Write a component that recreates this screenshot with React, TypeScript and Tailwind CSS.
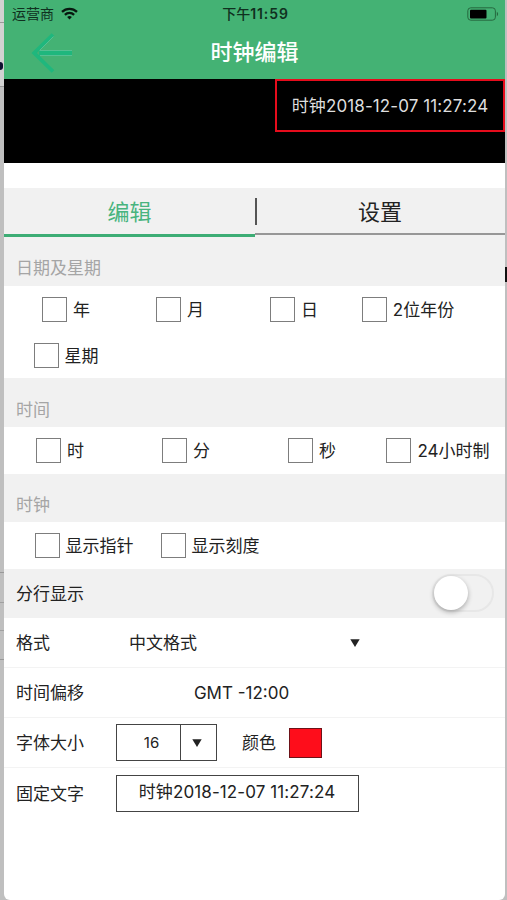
import type { ReactNode } from "react";

function CheckItem({ label }: { label: string }) {
  return (
    <label className="flex h-6 items-center justify-center whitespace-nowrap">
      <span className="mr-[6px] block size-[25px] shrink-0 border border-[#7d7d7d] bg-white" />
      <span className="pt-[3px]">{label}</span>
    </label>
  );
}

function SectionTitle({ className, children }: { className: string; children: ReactNode }) {
  return (
    <div className={`flex items-end bg-[#f1f1f1] pb-[5px] pl-3 leading-6 text-[#a5a5a5] ${className}`}>
      {children}
    </div>
  );
}

function Row({ label, children }: { label: string; children: ReactNode }) {
  return (
    <div className="flex h-[50px] items-center border-b border-[#f3f3f3] pl-3 last:border-b-0">
      <span className="w-[100px] shrink-0 pt-[3px]">{label}</span>
      {children}
    </div>
  );
}

function Triangle() {
  return (
    <svg width="10" height="8" viewBox="0 0 10 8">
      <path d="M0.3 0.3h9.4L5 8z" fill="#222" />
    </svg>
  );
}

function StatusBar() {
  return (
    <div className="grid h-[27px] grid-cols-3 items-center pl-2 pr-1.5 text-[14px] text-[#10301f]">
      <div className="flex items-center gap-[7px]">
        <span>运营商</span>
        <svg width="17" height="13" viewBox="0 0 17 13" fill="none" stroke="#07180f" strokeWidth="2.3">
          <path d="M1 4.9c4.2-4.1 10.8-4.1 15 0" />
          <path d="M3.9 7.8c2.6-2.5 6.6-2.5 9.2 0" />
          <path d="M6.1 10.1a3.4 3.4 0 0 1 4.8 0l-2.4 2.5z" fill="#07180f" stroke="none" />
        </svg>
      </div>
      <div className="whitespace-nowrap text-center font-semibold tracking-[0.9px]">
        <span className="font-medium tracking-normal">下午</span>11:59
      </div>
      <div className="flex items-center justify-end">
        <svg width="32" height="14" viewBox="0 0 32 14">
          <rect x="0.8" y="0.8" width="27.6" height="12.4" rx="3" fill="none" stroke="#26683f" />
          <rect x="3" y="2.8" width="16.5" height="8.6" rx="1" fill="#000" />
          <path d="M29.8 4.8c1.8.7 1.8 3.7 0 4.4z" fill="#26683f" />
        </svg>
      </div>
    </div>
  );
}

function Header() {
  return (
    <header className="h-[79px] bg-[#44b274]">
      <StatusBar />
      <div className="grid h-[51px] grid-cols-3 items-center">
        <svg className="ml-[27px]" width="42" height="40" viewBox="0 0 42 40" fill="none">
          <path d="M22 1.5L3.2 20L22 38.5" stroke="#1fb77d" strokeWidth="3.8" />
          <path d="M8 20h33" stroke="#1fb77d" strokeWidth="5.5" />
          <path d="M9 17.5h32M9 22.5h32M8.5 17.5L22.5 3.5" stroke="#56c093" />
        </svg>
        <h1 className="text-center text-[22px] font-medium text-white">时钟编辑</h1>
      </div>
    </header>
  );
}

export default function App() {
  return (
    <div className="relative h-[900px] w-[507px] overflow-hidden bg-[#bfbfbf] pl-1 pr-0.5 font-['Inter','Noto_Sans_CJK_SC',sans-serif] text-[17px] text-[#222]">
      {/* window edges behind the phone */}
      <div className="absolute left-0 top-0 h-[87px] w-1 border-b border-[#999] bg-[#d2d2d2]">
        <div className="h-[23px] border-b border-[#999]" />
        <div className="mt-[39px] h-2 w-[3px] rounded-r-full bg-[#101030]" />
      </div>
      <div className="absolute left-0 top-[572px] h-[88px] w-1 border-y border-[#999]">
        <div className="mt-[29px] h-[29px] border-y border-[#a0a0a0]" />
      </div>
      <div className="absolute right-0 top-[267px] h-[15px] w-0.5 bg-[#111]" />

      <div className="relative h-[900px] w-[501px] overflow-hidden rounded-b-[6px] bg-white">
        <Header />

        {/* Preview */}
        <div className="flex h-[84px] items-start justify-end bg-black">
          <div className="flex h-[53px] w-[230px] items-center justify-center border-2 border-[#e60c1c] text-[#dedede]">
            <span className="whitespace-nowrap pt-0.5 tracking-[0.1px]">时钟2018-12-07 11:27:24</span>
          </div>
        </div>

        {/* Tabs */}
        <div className="mt-[25px] flex h-[49px] bg-[#f1f1f1] text-[22px]">
          <div className="flex w-[251px] items-center justify-center border-b-[3px] border-[#3dad75] pt-0.5 text-[#48b47e]">
            编辑
          </div>
          <div className="relative flex h-[47px] flex-1 items-center justify-center border-b-2 border-[#979797] pt-[3px]">
            <span className="absolute left-0 top-[10px] h-[27px] w-0.5 bg-[#555]" />
            设置
          </div>
        </div>

        <SectionTitle className="h-[49px] pb-[6px]">日期及星期</SectionTitle>
        <div className="grid h-[92px] w-[461px] grid-cols-[114px_114px_114px_114px] content-start gap-y-[22px] pl-[5px] pt-[11px]">
          <CheckItem label="年" />
          <CheckItem label="月" />
          <CheckItem label="日" />
          <CheckItem label="2位年份" />
          <CheckItem label="星期" />
        </div>

        <SectionTitle className="h-[49px]">时间</SectionTitle>
        <div className="-ml-[7px] grid h-[47px] grid-cols-[126px_126px_126px_126px] items-center">
          <CheckItem label="时" />
          <CheckItem label="分" />
          <CheckItem label="秒" />
          <CheckItem label="24小时制" />
        </div>

        <SectionTitle className="h-[48px]">时钟</SectionTitle>
        <div className="grid h-[47px] grid-cols-[126px_126px] items-center pl-[17px]">
          <CheckItem label="显示指针" />
          <CheckItem label="显示刻度" />
        </div>

        <div className="flex h-[49px] items-center justify-between bg-[#f1f1f1] pl-3 pr-[11px]">
          <span className="pt-[3px]">分行显示</span>
          <div className="mb-0.5 h-[38px] w-[62px] rounded-full border-2 border-[#e7e7e7]">
            <div className="size-[34px] rounded-full bg-white shadow-[0_2px_5px_rgba(0,0,0,0.3)]" />
          </div>
        </div>

        {/* Options */}
        <div>
          <Row label="格式">
            <span className="ml-[13px] w-[221px] pt-[3px]">中文格式</span>
            <Triangle />
          </Row>
          <Row label="时间偏移">
            <span className="w-[251px] pt-[3px] text-center">GMT -12:00</span>
          </Row>
          <Row label="字体大小">
            <div className="flex h-[37px] w-[101px] border border-[#444]">
              <span className="flex w-[63px] items-center justify-center pl-1.5 pt-0.5 text-[15px]">16</span>
              <span className="flex flex-1 items-center justify-center border-l border-[#444] pr-[3px]">
                <Triangle />
              </span>
            </div>
            <span className="ml-[25px] pt-[3px]">颜色</span>
            <span className="ml-[13px] h-[30px] w-[33px] border border-[#6d1218] bg-[#fe0d1b]" />
          </Row>
          <Row label="固定文字">
            <div className="flex h-[37px] w-[243px] items-center justify-center whitespace-nowrap border border-[#444] pr-px tracking-[0.1px]">
              时钟2018-12-07 11:27:24
            </div>
          </Row>
        </div>
      </div>
    </div>
  );
}
